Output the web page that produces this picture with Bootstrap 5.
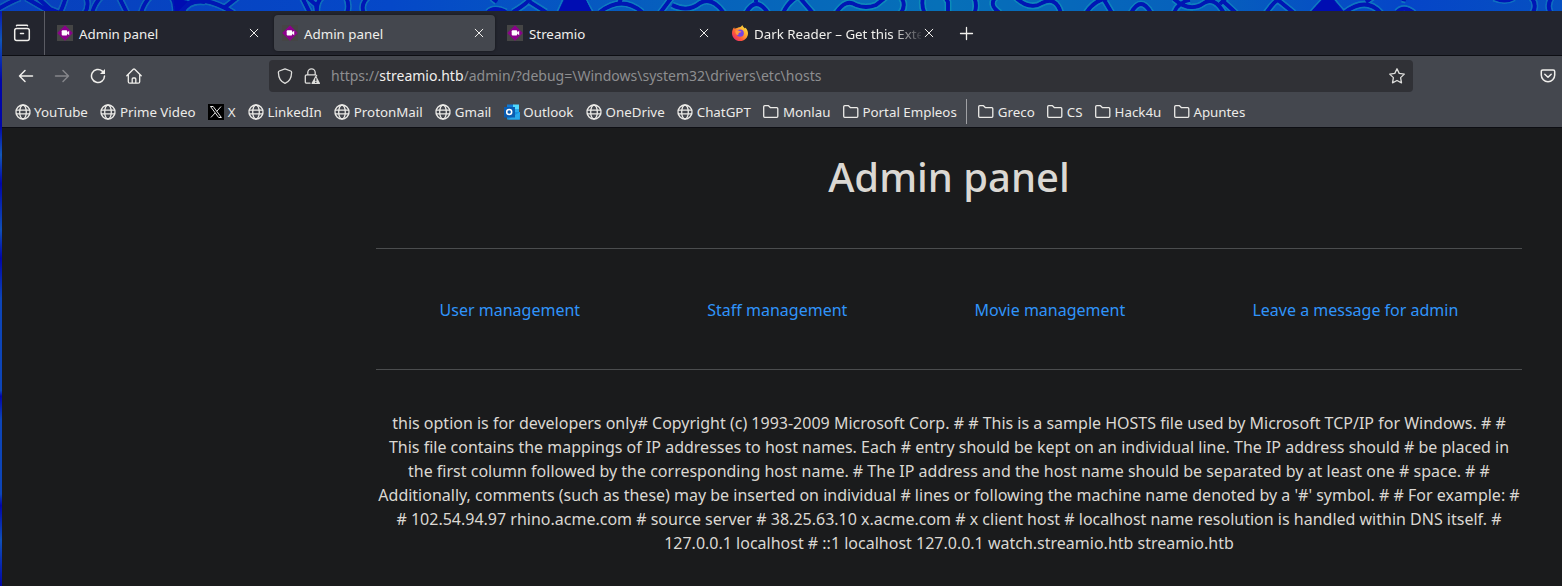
<!DOCTYPE html>
<html lang="en">
<head>
<meta charset="utf-8">
<title>Admin panel</title>
<link href="https://cdn.jsdelivr.net/npm/bootstrap@5.3.0/dist/css/bootstrap.min.css" rel="stylesheet">
<style>
  body { font-family: "Noto Sans", sans-serif; background: #0009b2; color: #dbd8d3; overflow: hidden; height: 586px; }
  .wallpaper { display: block; height: 11px; width: 1562px; overflow: hidden; }
  .side-strip { width: 2px; height: 575px; background: linear-gradient(#0818b0, #1055b8 5%, #0005a8 12%, #0005a8 20%, #1458b8 25%, #0005a8 30%, #1050b8 38%, #0005a8 43%, #0d45b8 50%, #0d45b8 66%, #0005a8 67%, #0d45b8 71%, #0d45b8 84%, #0005a8 86%, #1050b8 92%, #0005a8 100%); }
  .browser { height: 575px; background: #1a1b1c; min-width: 0; }
  .tab-strip { height: 45px; background: #23252e; border-bottom: 1px solid #0d0e13; }
  .tab-list-btn { width: 43px; border-right: 1px solid #5b5c64; padding-right: 2px; }
  .tab-item { width: 221px; height: 36px; margin: 0 0 0 4px; padding: 0 8px; border-radius: 4px; font-size: 13.33px; color: #f0efec; }
  .tab-item.current { background: #44474e; box-shadow: 0 0 3px rgba(0,0,0,.45); }
  .tab-item .title { margin-left: 6px; padding-top: 3px; width: 167px; white-space: nowrap; }
  .tab-item .fade-out { -webkit-mask-image: linear-gradient(90deg, #000 83%, transparent 102%); mask-image: linear-gradient(90deg, #000 83%, transparent 102%); }
  .tools { height: 40px; background: #44474e; color: #f0efec; }
  .address { width: 1144px; height: 32px; background: #303136; border-radius: 4px; padding: 0 8px; font-size: 14px; color: #8d8e90; }
  .address .url { padding-bottom: 2px; }
  .address b { font-weight: 400; color: #f0efec; }
  .bookmarks { height: 32px; background: #44474e; border-bottom: 1px solid #0d0e13; padding: 2px 0 0 12.500px; font-size: 13.33px; color: #ecebe8; white-space: nowrap; }
  .bm { display: flex; align-items: center; margin-right: 12.550px; }
  .bm svg { margin-right: 3.5px; }
  .bm-rule { width: 1px; height: 25px; background: #a0a1a5; margin: -2px 11px 0 -3px; }
  svg { flex: none; display: block; }
  .i { fill: none; stroke: currentColor; stroke-width: 1.3; stroke-linecap: round; stroke-linejoin: round; }
  .page { width: 1146px; margin-left: 374px; padding-top: 25px; }
  .page h1 { font-size: 40px; font-weight: 500; line-height: 48px; margin: 0; }
  .page hr { margin: 0; opacity: 1; border-color: #4b4d4e; }
  .page a { color: #3094fa; text-decoration: none; }
  .links { height: 120px; padding-top: 2px; }
</style>
</head>
<body>
<svg width="0" height="0" class="position-absolute">
  <defs>
    <symbol id="globe" viewBox="0 0 16 16"><g class="i"><circle cx="8" cy="8" r="7"/><ellipse cx="8" cy="8" rx="3.3" ry="7"/><path d="M1.2 6.2h13.6M1.2 9.8h13.6"/></g></symbol>
    <symbol id="folder" viewBox="0 0 16 16"><path class="i" d="M1.7 13.3c-.6 0-1-.4-1-1V2.700c0-.6.4-1 1-1h3.800l2 2h6.300c.6 0 1 .4 1 1v7.600c0 .6-.4 1-1 1z"/></symbol>
    <symbol id="cam" viewBox="0 0 16 16"><path fill="#454545" d="M0 0h16v16H0z"/><path fill="#8b008b" d="M8 .2 15.800 8 8 15.800.2 8z"/><rect x="4.700" y="5.300" width="5.500" height="5.200" rx="1" fill="#fff"/><path fill="#fff" d="m9.500 8 2.700-2.200v4.400z"/></symbol>
    <symbol id="close" viewBox="0 0 16 16"><path class="i" style="stroke-width:1" d="m4.200 4.200 7.600 7.600m0-7.600-7.600 7.600"/></symbol>
    <linearGradient id="sea" gradientUnits="userSpaceOnUse" x1="0" y1="0" x2="1562" y2="0"><stop offset="0" stop-color="#0840bc"/><stop offset=".25" stop-color="#0548c8"/><stop offset=".45" stop-color="#0662bc"/><stop offset=".6" stop-color="#0670b8"/><stop offset=".77" stop-color="#0660bc"/><stop offset=".9" stop-color="#0545c8"/><stop offset="1" stop-color="#0650c0"/></linearGradient>
    <linearGradient id="foam" gradientUnits="userSpaceOnUse" x1="0" y1="0" x2="1562" y2="0"><stop offset="0" stop-color="#0c60b8"/><stop offset=".4" stop-color="#0c7cc0"/><stop offset=".6" stop-color="#0c8cb8"/><stop offset=".8" stop-color="#0c7cc0"/><stop offset="1" stop-color="#0c6cc0"/></linearGradient>
    <linearGradient id="fx" x1="1" y1="0" x2="0" y2="1"><stop offset="0" stop-color="#fff44f"/><stop offset=".35" stop-color="#ffb02e"/><stop offset=".65" stop-color="#ff5a36"/><stop offset="1" stop-color="#e31587"/></linearGradient>
    <filter id="soft" filterUnits="userSpaceOnUse" x="0" y="-5" width="1562" height="22"><feGaussianBlur stdDeviation=".5"/></filter>
  </defs>
</svg>

<!-- desktop wallpaper above the window -->
<svg class="wallpaper" viewBox="0 0 1562 11">
  <defs>
    <path id="veins" d="M-2 9Q10 2 20-2M26-2 50 12M38-2 50 9 60 13M60 13Q64 4 66-3M86-3Q90 6 84 14M92 13Q95 3 101-3M119-3Q123 5 127 13M141 13Q144 3 150-3M172-3Q176 4 175 13M178 9 198-2M183 12Q188 0 205 2M178 12 188 2M205 1Q218 3 234 13M224 8 238-3M302-3 310 13M307-3 316 5 317 13M317 13Q316 3 322-3M346-3Q350 5 347 13M364 13Q360 5 368-3M492-2 497 2M488 12Q494 6 506 12M513 12Q528 3 532-3M530 2 546 12M566-1H583L590 12H560ZM600 12Q622-5 642 12M618 5 622-3M660 13 672-3M672 5Q688 13 700 3 712-4 724 13M746 13Q756-5 768 13M756-2V2M783 13Q788 2 797-3M800-2 813 13M836 13Q846-2 856 5 866 9 876 5L886-3M901-3Q907 6 900 14M923-3Q921 6 925 14M945-3 948 2 948 13M974-3Q978 6 974 14M996-3Q988 5 1000 13M1015-3Q1030 11 1042 3 1056-4 1061 13M1086 13Q1094 0 1108-2M1103-2 1112 13M1131 13Q1141-5 1151 13M1174 13Q1178 2 1190 0M1174-1Q1190 13 1204 3 1214-4 1224 13M1220 4 1227-3M1224 2 1236 13M1266 13Q1275 0 1282-3M1278 0 1294 13M1325-1H1331L1342 12H1313ZM1344 13Q1366-4 1381 13M1366 2 1373-3M1402-1 1406 0M1397 12Q1404 5 1414 13M1494-2Q1505 3 1514-2M1531-3Q1538 5 1532 14M1552-3Q1546 5 1551 14"/>
  </defs>
  <path fill="url(#sea)" d="M0 0h1562v11H0z"/>
  <g filter="url(#soft)" stroke-linejoin="round">
    <use href="#veins" fill="none" stroke="url(#foam)" stroke-width="7"/>
    <g fill="none"><use href="#veins" stroke="#0312b4" stroke-width="3.800"/></g>
    <path fill="#000ab2" d="M566-2h19l7 15h-33zM1325-2h6l12 15h-32zM174-2l14 3-12 12z"/>
  </g>
</svg>

<div class="d-flex">
  <div class="side-strip flex-shrink-0"></div>
  <div class="browser flex-grow-1">

    <div class="tab-strip d-flex align-items-center">
      <div class="tab-list-btn h-100 d-flex align-items-center justify-content-center">
        <svg width="20" height="20" viewBox="0 0 20 20" class="i" style="stroke-width:1.500;color:#f0efec"><path d="M4.500 2.800q0-.6.8-.6h9.400q.8 0 .8.600"/><rect x="2.700" y="5.500" width="14.600" height="12" rx="2"/><path d="M8.500 10.600h3"/></svg>
      </div>
      <div class="tab-item d-flex align-items-center"><svg width="16" height="16"><use href="#cam"/></svg><span class="title">Admin panel</span><svg width="16" height="16"><use href="#close"/></svg></div>
      <div class="tab-item current d-flex align-items-center"><svg width="16" height="16"><use href="#cam"/></svg><span class="title">Admin panel</span><svg width="16" height="16"><use href="#close"/></svg></div>
      <div class="tab-item d-flex align-items-center"><svg width="16" height="16"><use href="#cam"/></svg><span class="title">Streamio</span><svg width="16" height="16"><use href="#close"/></svg></div>
      <div class="tab-item d-flex align-items-center">
        <svg width="16" height="16" viewBox="0 0 16 16"><path fill="url(#fx)" d="M10.300 0c.3 1.600 1.800 2.300 2.700 3.500.3-.2.300-.7.200-1.100C15 4 16 6.200 16 8.200 16 12.700 12.500 16 8 16S0 12.500 0 8.200c0-2.300.7-4.200 2.200-6 0 .7.200 1.200.6 1.500.7-.6 1.500-.8 2.500-.8L6 2.400c2 0 3-.2 4.300-2.400z"/><circle cx="8.200" cy="8.200" r="3.600" fill="#7543e3"/><path fill="#ff9640" d="M3.500 5.500c1.500-.7 3.200-.3 4.500.8l1.500.3c-.3 1-1.600 1-2.500 1.300-1 .5.200 2-1.500 2.200C3.800 9.500 3 7.500 3.500 5.500z"/></svg>
        <span class="title fade-out">Dark Reader – Get this Exte</span><svg width="16" height="16"><use href="#close"/></svg>
      </div>
      <svg width="16" height="16" viewBox="0 0 16 16" class="i" style="color:#f0efec;margin-left:13px"><path d="M8.500 2.500v12M2.500 8.500h12"/></svg>
    </div>

    <div class="tools d-flex align-items-center">
      <svg width="16" height="16" viewBox="0 0 16 16" class="i" style="margin-left:16px;stroke-width:1.500"><path d="M14.500 8h-13m5.500-5.500L1.500 8 7 13.500"/></svg>
      <svg width="16" height="16" viewBox="0 0 16 16" class="i" style="margin-left:20px;color:#85868a;stroke-width:1.500"><path d="M1.500 8h13M9 2.500 14.500 8 9 13.500"/></svg>
      <svg width="16" height="16" viewBox="0 0 16 16" class="i" style="margin-left:20px;stroke-width:1.500"><path d="M14.500 8a6.500 6.500 0 1 1-2.200-4.900l1 1"/><path fill="currentColor" stroke="none" d="M15 1v5h-5z"/></svg>
      <svg width="16" height="16" viewBox="0 0 16 16" class="i" style="margin-left:19.500px;margin-right:.5px"><path d="M.8 7.800 7.300 1.300q.7-.6 1.400 0l6.500 6.500M2.300 6.600v7.100q0 1.500 1.500 1.500h8.400q1.500 0 1.500-1.500V6.600M6.200 15v-4q0-1 1-1h1.600q1 0 1 1v4"/></svg>
      <div class="address d-flex align-items-center" style="margin-left:127px">
        <svg width="16" height="16" viewBox="0 0 16 16" class="i" style="color:#dededc"><path d="M8 .8 13.700 3q1 .4.900 1.400C14.500 9.500 12.500 13.500 8 15.300 3.500 13.500 1.500 9.500 1.400 4.400q-.1-1 .9-1.400z"/></svg>
        <svg width="16" height="16" viewBox="0 0 16 16" style="margin-left:11px;margin-right:11px;color:#dededc"><path class="i" d="M3.800 6.800V4.500a3.700 3.700 0 0 1 7.400 0v2.300M6 15.200H2.800q-1.500 0-1.500-1.500V8.300q0-1.500 1.500-1.500h8.400q1.400 0 1.500 1"/><path fill="currentColor" d="M11.300 8.200q.5-.7 1 0l3.600 6.800q.3.900-.6 1H8.200q-.9-.1-.6-1z"/><path stroke="#303136" stroke-width="1.200" d="M11.800 10.300v2.600m0 .9v1.200"/></svg>
        <span class="url flex-grow-1">https://<b>streamio.htb</b>/admin/?debug=\Windows\system32\drivers\etc\hosts</span>
        <svg width="16" height="16" viewBox="0 0 16 16" class="i" style="color:#dededc"><path d="m8 .8 2.200 4.600 5.100.7-3.700 3.500.9 5.200L8 12.500l-4.500 2.300.9-5.200L.7 6.100l5.100-.7z"/></svg>
      </div>
      <svg width="16" height="16" viewBox="0 0 16 16" class="i" style="margin-left:127px;stroke-width:1.500"><path d="M2.800 2h10.400q1.500 0 1.500 1.500V7a6.700 6.700 0 0 1-13.400 0V3.500Q1.300 2 2.800 2z"/><path d="m4.800 6.300 3.200 3 3.200-3"/></svg>
    </div>

    <div class="bookmarks d-flex align-items-center">
      <span class="bm"><svg width="16" height="16"><use href="#globe"/></svg>YouTube</span>
      <span class="bm"><svg width="16" height="16"><use href="#globe"/></svg>Prime Video</span>
      <span class="bm"><svg width="16" height="16" viewBox="0 0 16 16"><path d="M0 0h16v16H0z"/><path fill="none" stroke="#fff" stroke-width=".9" d="M2.500 2.500h2.700l8.200 11h-2.700zM13 2.500 8.800 7.300M7.200 8.900l-4.300 4.600"/></svg>X</span>
      <span class="bm"><svg width="16" height="16"><use href="#globe"/></svg>LinkedIn</span>
      <span class="bm"><svg width="16" height="16"><use href="#globe"/></svg>ProtonMail</span>
      <span class="bm"><svg width="16" height="16"><use href="#globe"/></svg>Gmail</span>
      <span class="bm"><svg width="16" height="16" viewBox="0 0 16 16"><path fill="#0f78d4" d="M3 .5h6.500V8H3z"/><path fill="#50d9ff" d="M9 .5h6V8H9z"/><path fill="#28a8ea" d="M9 5h6v4H9z"/><path fill="#1490df" d="M3 8h13v7.500H3z"/><path fill="#28a8ea" d="m16 8-12 7.500h11.500z"/><path fill="#0a5cb0" d="M0 3h11v10.500H0z"/><circle cx="5.200" cy="8" r="2.500" fill="none" stroke="#fff" stroke-width="1.500"/></svg>Outlook</span>
      <span class="bm"><svg width="16" height="16"><use href="#globe"/></svg>OneDrive</span>
      <span class="bm"><svg width="16" height="16"><use href="#globe"/></svg>ChatGPT</span>
      <span class="bm"><svg width="16" height="16"><use href="#folder"/></svg>Monlau</span>
      <span class="bm"><svg width="16" height="16"><use href="#folder"/></svg>Portal Empleos</span>
      <span class="bm-rule"></span>
      <span class="bm"><svg width="16" height="16"><use href="#folder"/></svg>Greco</span>
      <span class="bm"><svg width="16" height="16"><use href="#folder"/></svg>CS</span>
      <span class="bm"><svg width="16" height="16"><use href="#folder"/></svg>Hack4u</span>
      <span class="bm"><svg width="16" height="16"><use href="#folder"/></svg>Apuntes</span>
    </div>

    <main class="page text-center">
      <h1>Admin panel</h1>
      <hr style="margin-top:47px">
      <nav class="links d-flex justify-content-around align-items-center">
        <a href="#">User management</a>
        <a href="#">Staff management</a>
        <a href="#">Movie management</a>
        <a href="#">Leave a message for admin</a>
      </nav>
      <hr>
      <div style="margin-top:41px">this option is for developers only# Copyright (c) 1993-2009 Microsoft Corp. # # This is a sample HOSTS file used by Microsoft TCP/IP for Windows. # # This file contains the mappings of IP addresses to host names. Each # entry should be kept on an individual line. The IP address should # be placed in the first column followed by the corresponding host name. # The IP address and the host name should be separated by at least one # space. # # Additionally, comments (such as these) may be inserted on individual # lines or following the machine name denoted by a '#' symbol. # # For example: # # 102.54.94.97 rhino.acme.com # source server # 38.25.63.10 x.acme.com # x client host # localhost name resolution is handled within DNS itself. # 127.0.0.1 localhost # ::1 localhost 127.0.0.1 watch.streamio.htb streamio.htb</div>
    </main>
  </div>
</div>
<script src="https://cdn.jsdelivr.net/npm/bootstrap@5.3.0/dist/js/bootstrap.bundle.min.js"></script>
</body>
</html>
